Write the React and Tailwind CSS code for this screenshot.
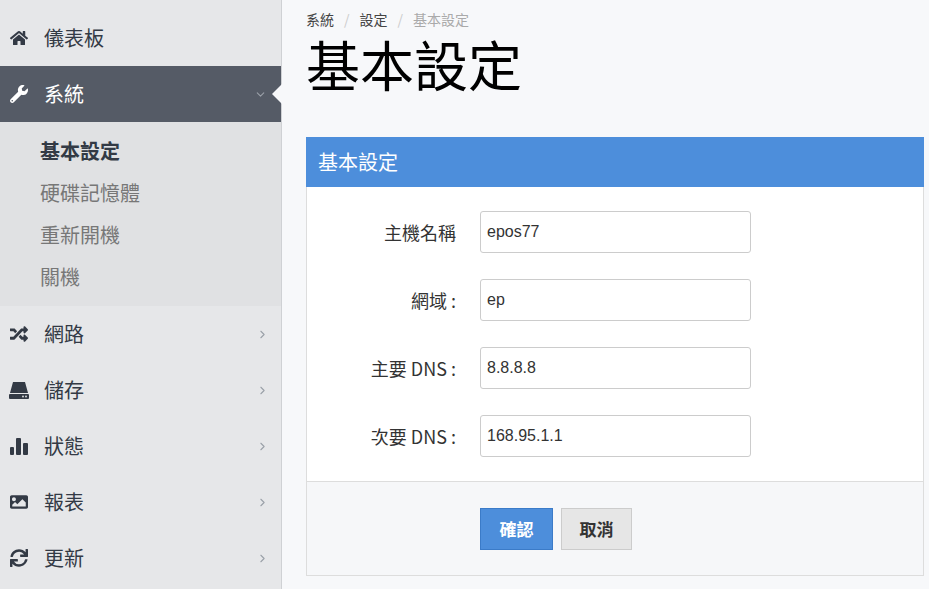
import React from "react";
import { FaHome, FaWrench, FaRandom, FaImage, FaSync } from "react-icons/fa";
import { LuChevronRight, LuChevronDown } from "react-icons/lu";

const F = { fontFamily: '"Noto Sans CJK TC","Liberation Sans",sans-serif' };

const Drive = () => (
  <svg width="20" height="18" viewBox="0 0 20 18" fill="currentColor">
    <path d="M4 1h12l3 11H1z" />
    <rect x="0" y="13" width="20" height="5" rx="1" />
    <circle cx="14" cy="15.5" r="0.9" fill="#e6e7e9" />
    <circle cx="17" cy="15.5" r="0.9" fill="#e6e7e9" />
  </svg>
);
const Bars = () => (
  <svg width="20" height="18" viewBox="0 0 20 18" fill="currentColor">
    <rect x="1" y="10" width="4" height="8" rx="1" />
    <rect x="7" y="1" width="5" height="17" rx="1" />
    <rect x="14" y="6" width="5" height="12" rx="1" />
  </svg>
);

function Item({ icon, label, arrow = true }) {
  return (
    <div className="h-[56px] flex items-center pl-[8px] pr-[12px] text-[#333a45]">
      <span className="w-[22px] flex justify-center text-[18px]">{icon}</span>
      <span className="ml-[14px] text-[20px] flex-1">{label}</span>
      {arrow && <LuChevronRight className="text-[#9aa0a8] text-[13px]" />}
    </div>
  );
}

function Field({ label, value }) {
  return (
    <div className="flex items-center h-[42px]">
      <div className="w-[173px] text-right pr-[24px] text-[18px] text-[#333]">{label}</div>
      <div className="w-[271px] h-[42px] border border-[#ccc] rounded-[3px] bg-white flex items-center px-[6px] text-[16px] text-[#333]" style={{fontFamily:'"Liberation Sans",sans-serif'}}>{value}</div>
    </div>
  );
}

export default function App() {
  return (
    <div className="flex w-[929px] h-[589px] overflow-hidden bg-[#f7f8fa]" style={F}>
      <div className="w-[282px] shrink-0 bg-[#e6e7e9] border-r border-[#cfd1d4] pt-[10px]">
        <Item icon={<FaHome />} label="儀表板" arrow={false} />
        <div className="relative h-[56px] flex items-center pl-[8px] pr-[12px] bg-[#555b66] text-white">
          <span className="w-[22px] flex justify-center text-[18px]"><FaWrench /></span>
          <span className="ml-[14px] text-[20px] flex-1">系統</span>
          <LuChevronDown className="text-[#9aa0a8] text-[13px] mr-[2px]" />
          <div className="absolute right-[-1px] top-[18px] w-0 h-0 border-y-[10px] border-y-transparent border-r-[10px] border-r-[#f7f8fa]" />
        </div>
        <div className="bg-[#e0e1e3] pl-[40px] py-[8px] text-[20px] leading-[42px] text-[#777]">
          <div className="font-bold text-[#333a45]">基本設定</div>
          <div>硬碟記憶體</div>
          <div>重新開機</div>
          <div>關機</div>
        </div>
        <Item icon={<FaRandom />} label="網路" />
        <Item icon={<Drive />} label="儲存" />
        <Item icon={<Bars />} label="狀態" />
        <Item icon={<FaImage />} label="報表" />
        <Item icon={<FaSync />} label="更新" />
      </div>
      <div className="flex-1 pl-[24px] pr-[5px]">
        <div className="pt-[9px] text-[14px] leading-[20px] text-[#444] flex gap-[10px]">
          <span>系統</span><span className="text-[#ccc]">/</span><span>設定</span><span className="text-[#ccc]">/</span><span className="text-[#aaa]">基本設定</span>
        </div>
        <div className="text-[54px] leading-[70px] text-black">基本設定</div>
        <div className="mt-[38px] border border-[#ddd] bg-white">
          <div className="h-[50px] bg-[#4d8edb] text-white text-[20px] flex items-center pl-[12px] -mx-px -mt-px">基本設定</div>
          <div className="py-[24px] flex flex-col gap-[26px]">
            <Field label="主機名稱" value="epos77" />
            <Field label="網域 :" value="ep" />
            <Field label="主要 DNS :" value="8.8.8.8" />
            <Field label="次要 DNS :" value="168.95.1.1" />
          </div>
          <div className="h-[94px] bg-[#f6f7f9] border-t border-[#ddd] flex items-center pl-[173px] gap-[8px]">
            <div className="w-[73px] h-[42px] bg-[#4d8edb] border border-[#3b7bc8] text-white text-[17px] font-bold flex items-center justify-center">確認</div>
            <div className="w-[71px] h-[42px] bg-[#e6e6e6] border border-[#ccc] text-[#333] text-[17px] font-bold flex items-center justify-center">取消</div>
          </div>
        </div>
      </div>
    </div>
  );
}
